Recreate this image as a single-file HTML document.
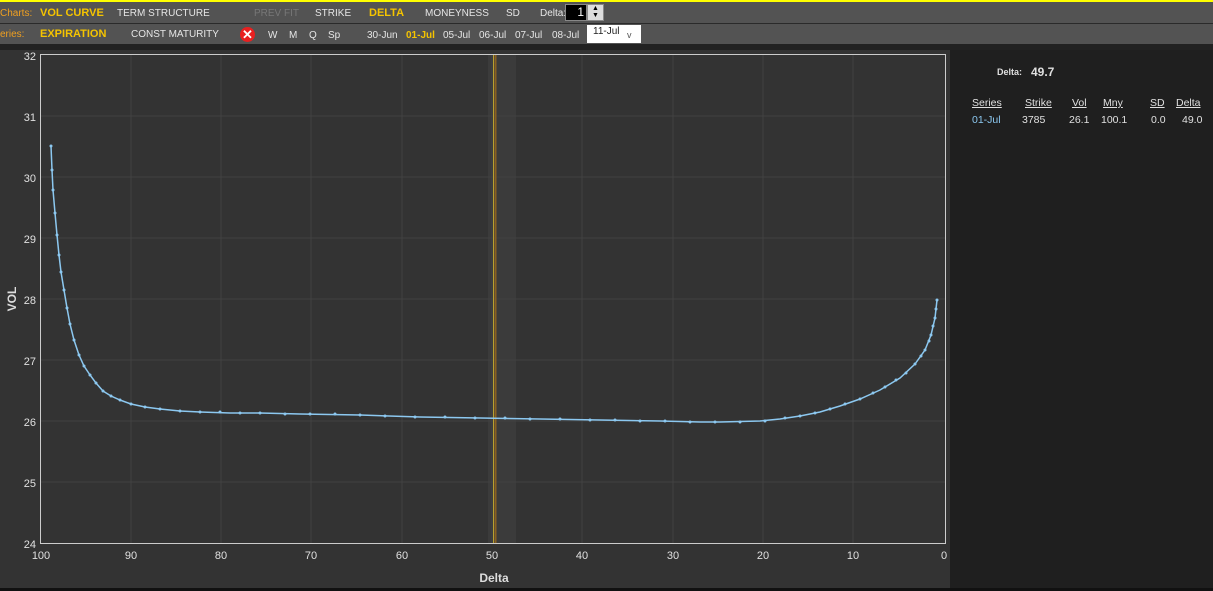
<!DOCTYPE html>
<html><head><meta charset="utf-8"><style>
*{margin:0;padding:0;box-sizing:border-box}
body{width:1213px;height:591px;overflow:hidden;background:#1f1f1f;font-family:"Liberation Sans",sans-serif;position:relative}
.t{position:absolute;white-space:nowrap;font-size:10px;color:#e6e6e6}
.y{color:#f5c400;font-weight:bold;font-size:11px}
.lab{color:#f0a020;font-size:10px}
.p{position:absolute;font-size:10.5px;color:#e0e0e0}
.u{text-decoration:underline;color:#e0e0e0}
.b{color:#8cc8f0}
</style></head><body>
<div style="position:absolute;left:0;top:0;width:1213px;height:2px;background:#ffff00"></div>
<div style="position:absolute;left:0;top:2px;width:1213px;height:21px;background:#535353"></div>
<div style="position:absolute;left:0;top:23px;width:1213px;height:1px;background:#2a2a2a"></div>
<div style="position:absolute;left:0;top:24px;width:1213px;height:20px;background:#535353"></div>
<div style="position:absolute;left:0;top:44px;width:1213px;height:6px;background:#222"></div>
<div style="position:absolute;left:0;top:50px;width:950px;height:538px;background:#333"></div>
<div style="position:absolute;left:0;top:588px;width:1213px;height:3px;background:#111"></div>

<span class="t lab" style="left:0;top:8px">Charts:</span>
<span class="t y" style="left:40px;top:7px">VOL CURVE</span>
<span class="t" style="left:117px;top:8px">TERM STRUCTURE</span>
<span class="t" style="left:254px;top:8px;color:#777">PREV FIT</span>
<span class="t" style="left:315px;top:8px">STRIKE</span>
<span class="t y" style="left:369px;top:7px">DELTA</span>
<span class="t" style="left:425px;top:8px">MONEYNESS</span>
<span class="t" style="left:506px;top:8px">SD</span>
<span class="t" style="left:540px;top:8px">Delta:</span>
<div style="position:absolute;left:565px;top:4px;width:22px;height:17px;background:#000;border:1px solid #888;color:#fff;font-size:12px;text-align:right;padding-right:2px">1</div>
<div style="position:absolute;left:587px;top:4px;width:17px;height:17px;background:#ddd;border:1px solid #888;font-size:7px;line-height:7px;text-align:center;color:#000">▲<br>▼</div>

<span class="t lab" style="left:0;top:29px">eries:</span>
<span class="t y" style="left:40px;top:28px">EXPIRATION</span>
<span class="t" style="left:131px;top:29px">CONST MATURITY</span>
<div style="position:absolute;left:240px;top:27px;width:15px;height:15px;border-radius:50%;background:#e82020;color:#fff;font-size:13px;line-height:15px;text-align:center;font-weight:bold">✕</div>
<span class="t" style="left:268px;top:30px">W</span>
<span class="t" style="left:289px;top:30px">M</span>
<span class="t" style="left:309px;top:30px">Q</span>
<span class="t" style="left:328px;top:30px">Sp</span>
<span class="t" style="left:367px;top:30px">30-Jun</span>
<span class="t" style="left:406px;top:30px;color:#f5c400;font-weight:bold">01-Jul</span>
<span class="t" style="left:443px;top:30px">05-Jul</span>
<span class="t" style="left:479px;top:30px">06-Jul</span>
<span class="t" style="left:515px;top:30px">07-Jul</span>
<span class="t" style="left:552px;top:30px">08-Jul</span>
<div style="position:absolute;left:587px;top:25px;width:54px;height:18px;background:#fff"></div>
<span class="t" style="left:593px;top:26px;color:#222">11-Jul</span>
<span class="t" style="left:627px;top:30px;color:#555;font-size:9px">v</span>

<svg style="position:absolute;left:0;top:0" width="950" height="591">
<rect x="488" y="55" width="28" height="488" fill="#3b3b3b"/>
<g stroke="#424242" stroke-width="1">
<line x1="131" y1="55" x2="131" y2="543"/><line x1="221" y1="55" x2="221" y2="543"/><line x1="311" y1="55" x2="311" y2="543"/><line x1="402" y1="55" x2="402" y2="543"/><line x1="492" y1="55" x2="492" y2="543"/><line x1="582" y1="55" x2="582" y2="543"/><line x1="673" y1="55" x2="673" y2="543"/><line x1="763" y1="55" x2="763" y2="543"/><line x1="853" y1="55" x2="853" y2="543"/>
<line x1="41" y1="116" x2="945" y2="116"/><line x1="41" y1="177" x2="945" y2="177"/><line x1="41" y1="238" x2="945" y2="238"/><line x1="41" y1="299" x2="945" y2="299"/><line x1="41" y1="360" x2="945" y2="360"/><line x1="41" y1="421" x2="945" y2="421"/><line x1="41" y1="482" x2="945" y2="482"/>
</g>
<line x1="493.5" y1="55" x2="493.5" y2="543" stroke="#b8a030" stroke-width="1"/>
<line x1="495.5" y1="55" x2="495.5" y2="543" stroke="#8a6020" stroke-width="2"/>
<path d="M40.5 54.5H945.5V543.5H40.5Z" fill="none" stroke="#ccc" stroke-width="1"/>
<polyline fill="none" stroke="#8cc8f0" stroke-width="1.5" points="51,146 52,170 53,190 55,213 57,235 59,255 61,272 64,290 67,308 70,324 74,340 79,355 84,366 90,375 96,383 103,391 111,396 120,400 131,404 145,407 160,409 180,411 200,412 230,413 260,413 300,414 360,415 420,417 480,418 540,419 600,420 660,421 700,422 720,422 760,421 780,419 800,416 820,412 840,406 860,399 880,390 900,378 915,364 925,350 931,335 935,318 937,300"/>
<g fill="#8cc8f0">
<circle cx="51" cy="146" r="1.5"/><circle cx="52" cy="170" r="1.5"/><circle cx="53" cy="190" r="1.5"/><circle cx="55" cy="213" r="1.5"/><circle cx="57" cy="235" r="1.5"/><circle cx="59" cy="255" r="1.5"/><circle cx="61" cy="272" r="1.5"/><circle cx="64" cy="290" r="1.5"/><circle cx="67" cy="308" r="1.5"/><circle cx="70" cy="324" r="1.5"/><circle cx="74" cy="340" r="1.5"/><circle cx="79" cy="355" r="1.5"/><circle cx="84" cy="366" r="1.5"/><circle cx="90" cy="375" r="1.5"/><circle cx="96" cy="383" r="1.5"/><circle cx="103" cy="391" r="1.5"/><circle cx="111" cy="396" r="1.5"/><circle cx="120" cy="400" r="1.5"/><circle cx="131" cy="404" r="1.5"/><circle cx="145" cy="407" r="1.5"/><circle cx="160" cy="409" r="1.5"/><circle cx="180" cy="411" r="1.5"/><circle cx="200" cy="412" r="1.5"/><circle cx="220" cy="412" r="1.5"/><circle cx="240" cy="413" r="1.5"/><circle cx="260" cy="413" r="1.5"/><circle cx="285" cy="414" r="1.5"/><circle cx="310" cy="414" r="1.5"/><circle cx="335" cy="414" r="1.5"/><circle cx="360" cy="415" r="1.5"/><circle cx="385" cy="416" r="1.5"/><circle cx="415" cy="417" r="1.5"/><circle cx="445" cy="417" r="1.5"/><circle cx="475" cy="418" r="1.5"/><circle cx="505" cy="418" r="1.5"/><circle cx="530" cy="419" r="1.5"/><circle cx="560" cy="419" r="1.5"/><circle cx="590" cy="420" r="1.5"/><circle cx="615" cy="420" r="1.5"/><circle cx="640" cy="421" r="1.5"/><circle cx="665" cy="421" r="1.5"/><circle cx="690" cy="422" r="1.5"/><circle cx="715" cy="422" r="1.5"/><circle cx="740" cy="422" r="1.5"/><circle cx="765" cy="421" r="1.5"/><circle cx="785" cy="418" r="1.5"/><circle cx="800" cy="416" r="1.5"/><circle cx="815" cy="413" r="1.5"/><circle cx="830" cy="409" r="1.5"/><circle cx="845" cy="404" r="1.5"/><circle cx="860" cy="399" r="1.5"/><circle cx="873" cy="393" r="1.5"/><circle cx="885" cy="387" r="1.5"/><circle cx="896" cy="380" r="1.5"/><circle cx="906" cy="373" r="1.5"/><circle cx="915" cy="364" r="1.5"/><circle cx="921" cy="356" r="1.5"/><circle cx="925" cy="350" r="1.5"/><circle cx="929" cy="341" r="1.5"/><circle cx="931" cy="335" r="1.5"/><circle cx="933" cy="326" r="1.5"/><circle cx="935" cy="318" r="1.5"/><circle cx="936" cy="309" r="1.5"/><circle cx="937" cy="300" r="1.5"/>
</g>
<g fill="#e0e0e0" font-size="11" font-family="Liberation Sans" text-anchor="end">
<text x="36" y="60">32</text><text x="36" y="121">31</text><text x="36" y="182">30</text><text x="36" y="243">29</text><text x="36" y="304">28</text><text x="36" y="365">27</text><text x="36" y="426">26</text><text x="36" y="487">25</text><text x="36" y="548">24</text>
</g>
<g fill="#e0e0e0" font-size="11" font-family="Liberation Sans" text-anchor="middle">
<text x="41" y="559">100</text><text x="131" y="559">90</text><text x="221" y="559">80</text><text x="311" y="559">70</text><text x="402" y="559">60</text><text x="492" y="559">50</text><text x="582" y="559">40</text><text x="673" y="559">30</text><text x="763" y="559">20</text><text x="853" y="559">10</text><text x="944" y="559">0</text>
<text x="494" y="582" font-weight="bold" font-size="12" fill="#ddd">Delta</text>
<text transform="translate(16,299) rotate(-90)" font-weight="bold" font-size="12" fill="#ddd">VOL</text>
</g>
</svg>

<span class="p" style="left:997px;top:67px;font-size:9px;font-weight:bold">Delta:</span>
<span class="p" style="left:1031px;top:65px;font-size:12px;font-weight:bold">49.7</span>
<span class="p u" style="left:972px;top:97px">Series</span>
<span class="p u" style="left:1025px;top:97px">Strike</span>
<span class="p u" style="left:1072px;top:97px">Vol</span>
<span class="p u" style="left:1103px;top:97px">Mny</span>
<span class="p u" style="left:1150px;top:97px">SD</span>
<span class="p u" style="left:1176px;top:97px">Delta</span>
<span class="p b" style="left:972px;top:114px">01-Jul</span>
<span class="p" style="left:1022px;top:114px">3785</span>
<span class="p" style="left:1069px;top:114px">26.1</span>
<span class="p" style="left:1101px;top:114px">100.1</span>
<span class="p" style="left:1151px;top:114px">0.0</span>
<span class="p" style="left:1182px;top:114px">49.0</span>
</body></html>
